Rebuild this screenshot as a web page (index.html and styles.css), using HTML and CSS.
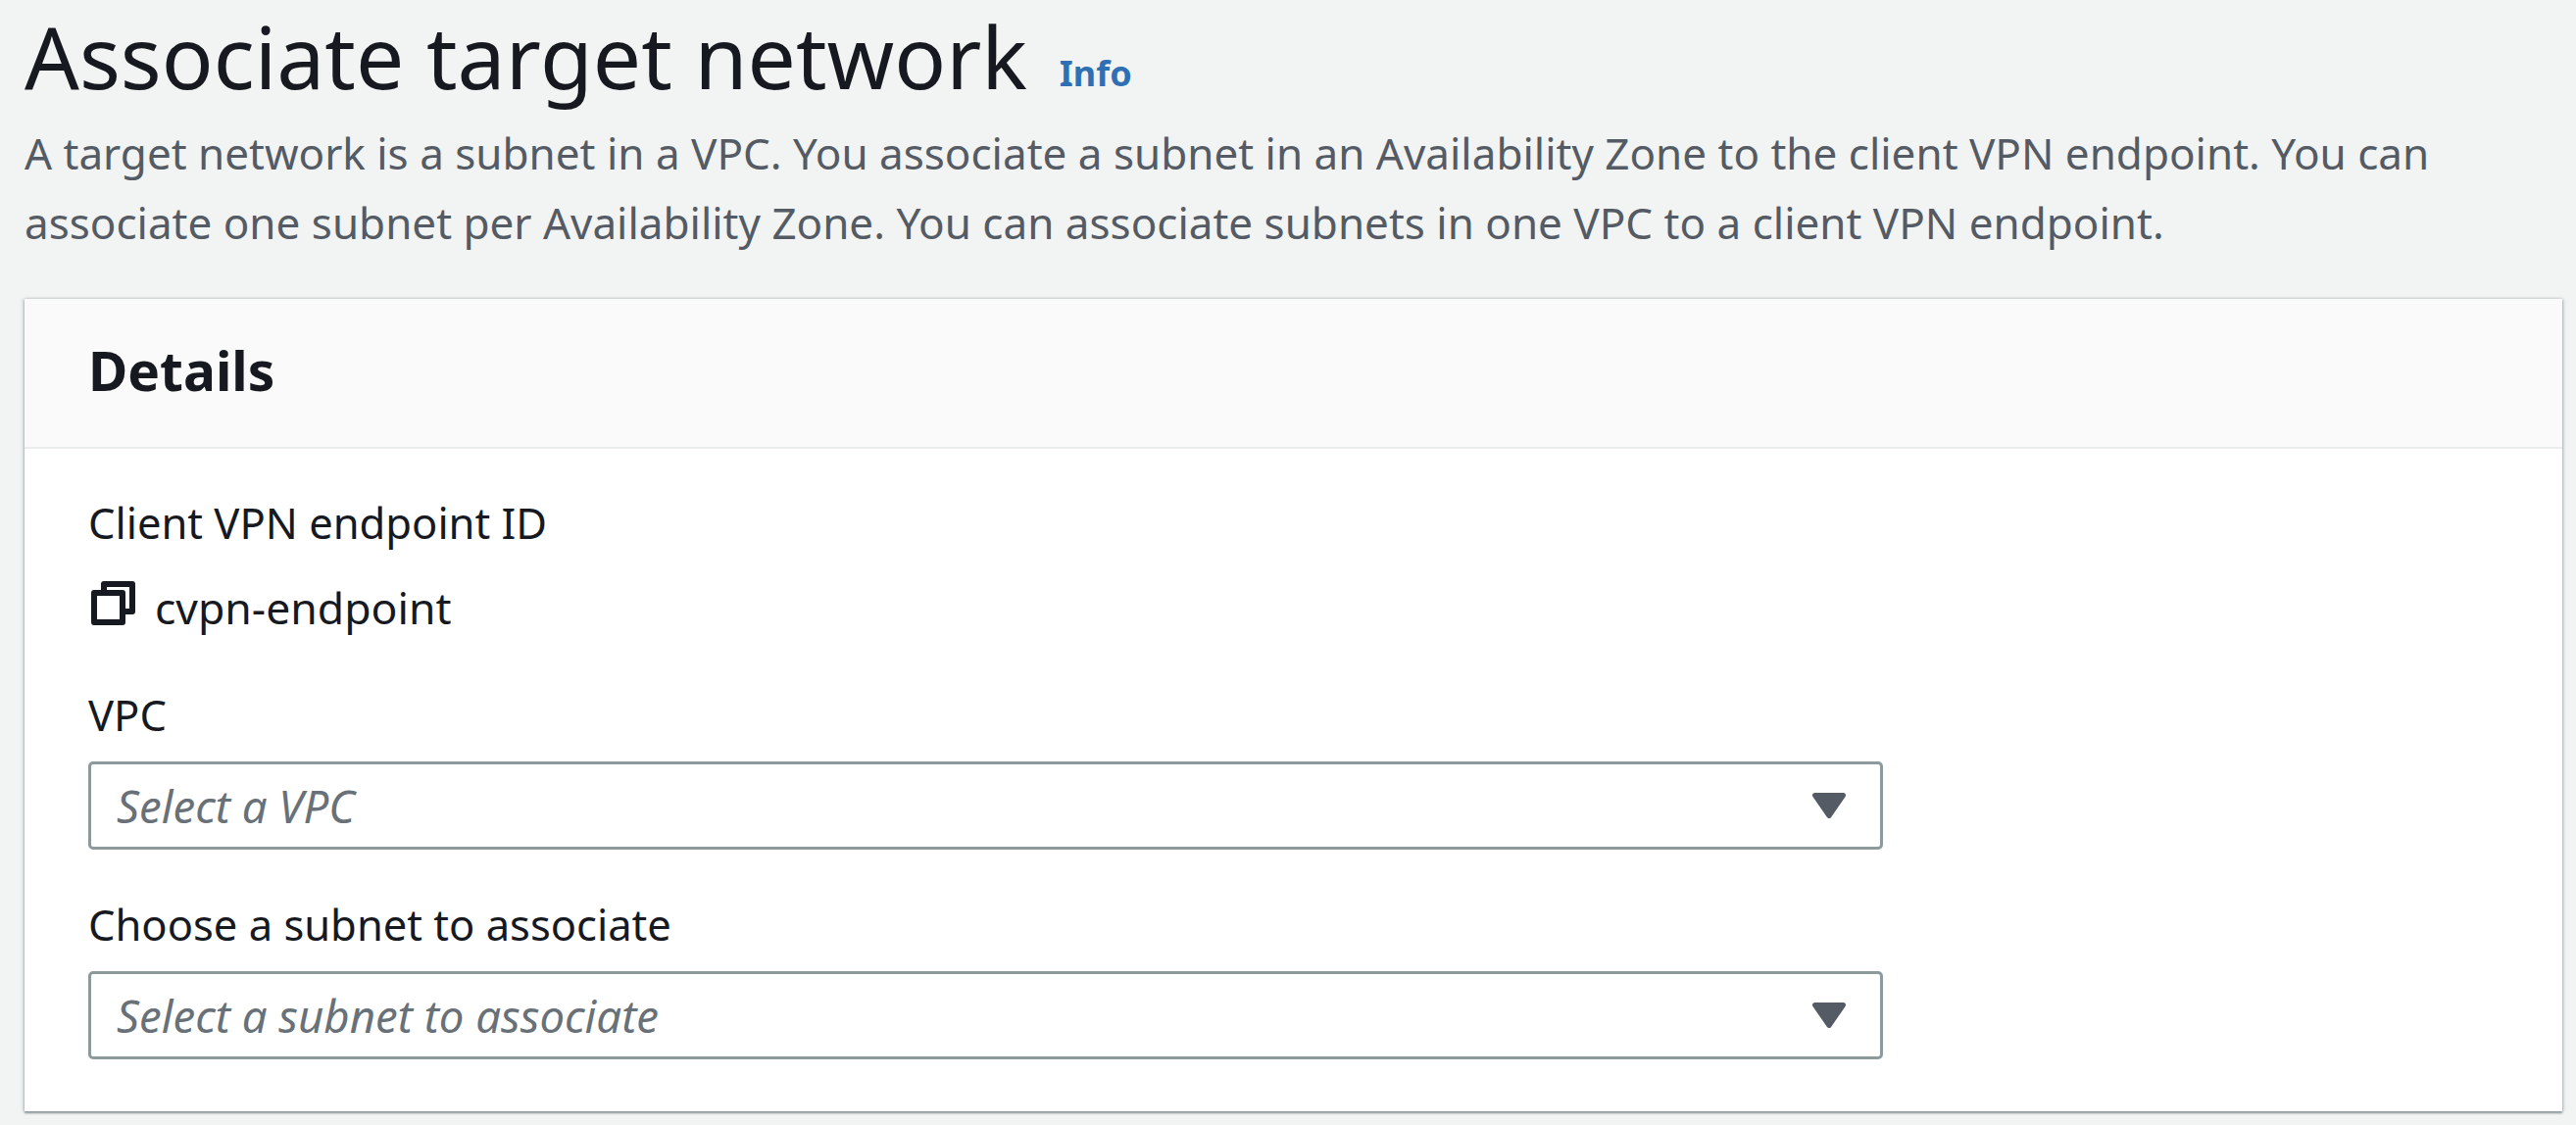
FILE: index.html
```html
<!DOCTYPE html>
<html lang="en">
<head>
<meta charset="utf-8">
<title>Associate target network</title>
<link rel="stylesheet" href="styles.css">
</head>
<body>
<header class="page-head">
  <h1 class="title">Associate target network <a class="info" href="#">Info</a></h1>
  <p class="desc">A target network is a subnet in a VPC. You associate a subnet in an Availability Zone to the client VPN endpoint. You can<br>associate one subnet per Availability Zone. You can associate subnets in one VPC to a client VPN endpoint.</p>
</header>
<section class="card">
  <h2 class="card-head">Details</h2>
  <div class="card-body">
    <div class="label">Client VPN endpoint ID</div>
    <div class="value">
      <svg class="copy" viewBox="0 0 45 45" aria-hidden="true"><path d="M13 9V3H42V31H35M3 12H32V42H3Z" fill="none" stroke="#16191f" stroke-width="6" stroke-linejoin="round"/></svg>
      <span>cvpn-endpoint</span>
    </div>
    <div class="label label-vpc">VPC</div>
    <div class="select">
      <span class="placeholder">Select a VPC</span>
      <svg class="caret" viewBox="0 0 34 26" aria-hidden="true"><path d="M2.500 2.500H31.500L17 23.500Z" fill="#545b64" stroke="#545b64" stroke-width="5" stroke-linejoin="round"/></svg>
    </div>
    <div class="label label-subnet">Choose a subnet to associate</div>
    <div class="select">
      <span class="placeholder">Select a subnet to associate</span>
      <svg class="caret" viewBox="0 0 34 26" aria-hidden="true"><path d="M2.500 2.500H31.500L17 23.500Z" fill="#545b64" stroke="#545b64" stroke-width="5" stroke-linejoin="round"/></svg>
    </div>
  </div>
</section>
</body>
</html>
```
FILE: styles.css
```css
* { box-sizing: border-box; }
html, body { margin: 0; height: 100%; overflow: hidden; }
body {
  background: #f2f3f3;
  color: #16191f;
  font-family: "Noto Sans", "Open Sans", sans-serif;
  padding: 0 14px 0 25px;
}
.title {
  margin: 0;
  padding: 5px 0 12px;
  font-size: 87.500px;
  line-height: 104px;
  font-weight: 400;
}
.info {
  margin-left: 10px;
  font-size: 36px;
  line-height: 1;
  font-weight: 700;
  color: #2f70b5;
  text-decoration: none;
  vertical-align: 3px;
}
.desc {
  margin: 0;
  font-size: 44px;
  line-height: 71px;
  color: #545b64;
}
.card {
  margin-top: 42px;
  height: 829px;
  background: #fff;
  box-shadow: 0 2px 2px #8b9699, 2px 0 3px rgba(0,28,36,.12), -2px 0 3px rgba(0,28,36,.12), 0 -1px 2px rgba(0,28,36,.06);
}
.card-head {
  margin: 0;
  height: 153px;
  padding: 0 65px;
  background: #fafafa;
  border-bottom: 2px solid #eaeded;
  font-size: 55px;
  line-height: 146px;
  font-weight: 700;
}
.card-body { padding: 47px 65px 0; width: 1961px; }
.label { font-size: 43.500px; line-height: 56px; }
.value {
  display: flex;
  align-items: center;
  gap: 20px;
  margin-top: 31px;
  font-size: 44.500px;
  line-height: 56px;
}
.copy { width: 45px; height: 45px; flex: none; margin: 0 0 10px 3px; }
.label-vpc { margin-top: 53px; }
.label-subnet { margin-top: 48px; }
.select {
  display: flex;
  align-items: center;
  justify-content: space-between;
  height: 90px;
  margin-top: 20px;
  padding: 0 35px 0 26px;
  border: 3px solid #8d9a9b;
  border-radius: 5px;
  background: #fff;
}
.placeholder { font-size: 45.500px; font-style: italic; color: #687078; }
.caret { width: 34px; height: 26px; flex: none; }
```
